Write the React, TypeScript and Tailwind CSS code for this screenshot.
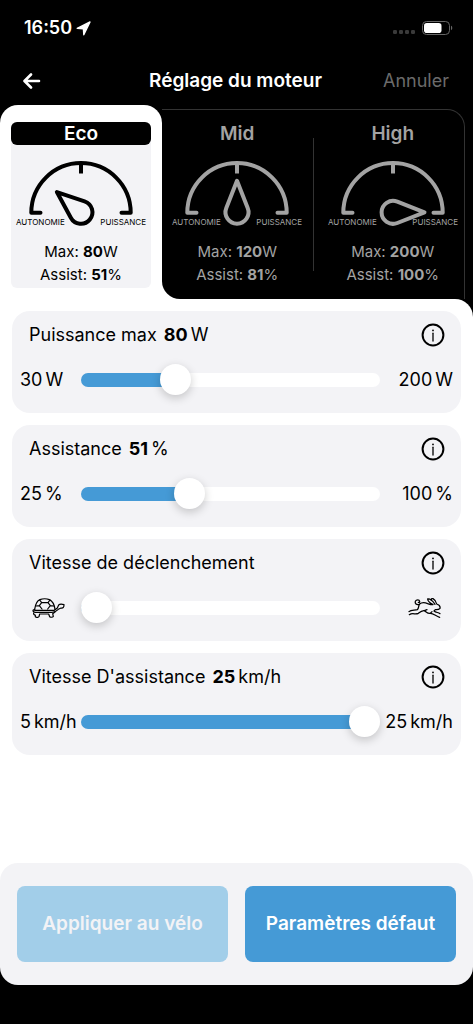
import { useState, type ReactNode } from "react";
import clsx from "clsx";

type Mode = {
  id: string;
  name: string;
  power: number;
  assist: number;
  angle: number;
};

const MODES: Mode[] = [
  { id: "eco", name: "Eco", power: 80, assist: 51, angle: -50 },
  { id: "mid", name: "Mid", power: 120, assist: 81, angle: 0 },
  { id: "high", name: "High", power: 200, assist: 100, angle: 90 },
];

const THUMB = 31;

function Gauge({ angle }: { angle: number }) {
  return (
    <svg
      aria-hidden="true"
      className="mx-auto mt-[15px] block h-[68px] w-[130px] overflow-visible"
      fill="none"
      stroke="currentColor"
      strokeLinecap="round"
      strokeLinejoin="round"
      strokeWidth="4"
      viewBox="0 0 130 68"
    >
      <path d="M24.5 52.7 H15.3 A49.7 49.7 0 0 1 114.7 52.7 H105.5" />
      <path d="M65 3 V13.5" strokeLinecap="butt" />
      <path
        d="M0 -31.5 L10.7 -4.3 A11.5 11.5 0 1 1 -10.7 -4.3 Z"
        transform={`translate(65 52.3) rotate(${angle})`}
      />
      <g className="text-[8px]" fill="currentColor" stroke="none">
        <text x="0" y="65">AUTONOMIE</text>
        <text textAnchor="end" x="130" y="65">PUISSANCE</text>
      </g>
    </svg>
  );
}

type ModeTabProps = {
  mode: Mode;
  active?: boolean;
  className?: string;
};

function ModeTab({ mode, active, className }: ModeTabProps) {
  return (
    <button
      aria-pressed={Boolean(active)}
      className={clsx(
        "block self-start text-center",
        active ? "rounded-md bg-[#f3f3f6] text-black" : "text-[#a3a3a3]",
        className,
      )}
      type="button"
    >
      <span
        className={clsx(
          "block h-[23px] rounded-md text-[19px] leading-[23px] font-semibold",
          active && "bg-black text-white",
        )}
      >
        {mode.name}
      </span>
      <Gauge angle={mode.angle} />
      <span className="mt-3 block pb-0.5 text-[15px] leading-[23px]">
        <span className="block">
          Max: <b>{mode.power}</b>W
        </span>
        <span className="block">
          Assist: <b>{mode.assist}</b>%
        </span>
      </span>
    </button>
  );
}

function InfoIcon() {
  return (
    <svg aria-hidden="true" className="size-6" fill="none" stroke="currentColor" viewBox="0 0 24 24">
      <circle cx="12" cy="12" r="10.4" strokeWidth="2" />
      <path d="M12 10.2 V18" strokeLinecap="round" strokeWidth="1.3" />
      <circle cx="12" cy="7.4" fill="currentColor" r="0.9" stroke="none" />
    </svg>
  );
}

function TortoiseIcon() {
  return (
    <svg
      aria-label="Lent"
      className="h-5 w-[33px]"
      fill="none"
      role="img"
      stroke="currentColor"
      strokeLinecap="round"
      strokeLinejoin="round"
      strokeWidth="3.6"
      viewBox="0 0 99 60"
    >
      <path d="M8 34 C10 20 16 8 24 5 C31 2 45 2 52 5 C61 9 67 20 69 34" />
      <path d="M8 34 L3 37 C3 42 6 43 10 43 H60 C68 43 73 40 79 34 L87 30 C94 31 96 27 96 20 C90 18 83 18 80 21 L76 30 L67 37 H8" />
      <path d="M23 6 L29 14 H48 L54 6 M29 14 L22 23 L30 33 M48 14 L55 23 L47 33 M22 23 L12 24 M55 23 L65 24" />
      <path d="M5 45 C4 49 7 51 10 51 L10 56 C14 59 19 58 21 56 L23 48 H50 L53 56 C57 59 62 58 64 55 L62 47 L69 42" />
    </svg>
  );
}

function HareIcon() {
  return (
    <svg
      aria-label="Rapide"
      className="h-5 w-[33px]"
      fill="none"
      role="img"
      stroke="currentColor"
      strokeLinecap="round"
      strokeLinejoin="round"
      strokeWidth="3.8"
      viewBox="0 0 99 60"
    >
      <path d="M34 19 C25 22 20 16 22 10 C25 4 34 4 35 10 C36 13 33 14 31 13" />
      <path d="M34 19 C42 12 52 14 59 17 C65 19 70 21 75 20 C66 15 59 9 59 3 C67 2 75 10 81 19" />
      <path d="M70 7 C69 2 72 1 75 2 C82 6 85 13 86 18 C93 20 97 26 96 31 C92 36 86 35 82 35 L78 39 C84 44 91 43 96 47" />
      <path d="M34 19 C31 25 33 31 28 35 C20 38 10 34 3 41 M4 50 C14 43 22 51 31 46 C37 41 42 37 49 38 C56 42 58 47 67 46 C77 46 83 54 95 58" />
      <path d="M49 38 L57 35 M67 46 L72 41" />
    </svg>
  );
}

type SettingCardProps = {
  id: string;
  title: string;
  unit?: string;
  min: number;
  max: number;
  initial: number;
  minLabel: ReactNode;
  maxLabel: ReactNode;
};

function SettingCard({ id, title, unit, min, max, initial, minLabel, maxLabel }: SettingCardProps) {
  const [value, setValue] = useState(initial);
  const ratio = (value - min) / (max - min);
  // the fill stops under the middle of the thumb
  const fill = `calc(${THUMB / 2}px + (100% - ${THUMB}px) * ${ratio})`;

  return (
    <section className="rounded-[18px] bg-[#f3f3f6] px-2 pb-[19px]">
      <div className="flex h-[47px] items-center justify-between pr-2 pl-[9px]">
        <label className="text-lg" htmlFor={id}>
          {title}
          {unit ? (
            <>
              <b className="ml-[7px] font-bold">{value}</b>
              <span className="ml-[3px]">{unit}</span>
            </>
          ) : null}
        </label>
        <button aria-label={`Info : ${title}`} type="button">
          <InfoIcon />
        </button>
      </div>
      <div className="grid h-9 grid-cols-[61px_1fr_73px] items-end text-lg whitespace-nowrap">
        <span>{minLabel}</span>
        <span className="flex h-7 items-center">
          <input
            className="h-[14px] w-full cursor-pointer appearance-none rounded-full [&::-webkit-slider-runnable-track]:h-[14px] [&::-webkit-slider-thumb]:-mt-[9px] [&::-webkit-slider-thumb]:size-[31px] [&::-webkit-slider-thumb]:appearance-none [&::-webkit-slider-thumb]:rounded-full [&::-webkit-slider-thumb]:bg-white [&::-webkit-slider-thumb]:shadow-[0_3px_10px_rgba(0,0,0,0.2)]"
            id={id}
            max={max}
            min={min}
            onChange={(event) => setValue(Number(event.target.value))}
            style={{ background: `linear-gradient(to right, #459ad6 ${fill}, #fff ${fill})` }}
            type="range"
            value={value}
          />
        </span>
        <span className="text-right">{maxLabel}</span>
      </div>
    </section>
  );
}

function Quantity({ value, unit }: { value: number; unit: string }) {
  return (
    <>
      {value}
      <span className="ml-[3px]">{unit}</span>
    </>
  );
}

function StatusBar() {
  return (
    <div className="flex h-14 items-center justify-between pr-5 pl-6 text-white">
      <div className="flex items-center gap-1">
        <span className="text-lg font-semibold">16:50</span>
        <svg
          aria-hidden="true"
          className="size-[15px]"
          fill="currentColor"
          stroke="currentColor"
          strokeLinejoin="round"
          strokeWidth="1.4"
          viewBox="0 0 15 15"
        >
          <path d="M14 1 L7.8 13.8 L7.4 7.8 L1.2 7.4 Z" />
        </svg>
      </div>
      <div className="flex items-center gap-[7px]">
        <svg aria-hidden="true" className="h-[14px] w-[22px]" fill="#3a3a3a" viewBox="0 0 22 14">
          <rect height="4" rx="1.3" width="4" x="0" y="9" />
          <rect height="4" rx="1.3" width="4" x="6" y="9" />
          <rect height="4" rx="1.3" width="4" x="12" y="9" />
          <rect height="4" rx="1.3" width="4" x="18" y="9" />
        </svg>
        <svg aria-hidden="true" className="h-[14px] w-[31px]" fill="none" viewBox="0 0 31 14">
          <rect height="13" rx="4" stroke="#666" width="27" x="0.5" y="0.5" />
          <rect fill="#fff" height="10" rx="2.8" width="17.5" x="2" y="2" />
          <path d="M29 4.8 C30.7 5.4 30.7 8.6 29 9.2 Z" fill="#666" />
        </svg>
      </div>
    </div>
  );
}

export default function App() {
  const [eco, mid, high] = MODES;

  return (
    <div className="flex min-h-screen flex-col bg-black font-['Inter',sans-serif] text-black">
      <StatusBar />

      <header className="grid h-[49px] grid-cols-[1fr_auto_1fr] items-center pr-6 pl-[22px] text-lg">
        <button aria-label="Retour" className="justify-self-start text-white" type="button">
          <svg
            aria-hidden="true"
            className="h-4 w-5"
            fill="none"
            stroke="currentColor"
            strokeLinecap="round"
            strokeLinejoin="round"
            strokeWidth="2.6"
            viewBox="0 0 20 16"
          >
            <path d="M9 1.5 L2.5 8 L9 14.5 M3 8 H17" />
          </svg>
        </button>
        <h1 className="text-[19px] font-semibold text-white">Réglage du moteur</h1>
        <button className="justify-self-end text-[#6b6b6b]" type="button">
          Annuler
        </button>
      </header>

      <nav aria-label="Mode" className="grid grid-cols-[162fr_311fr]">
        <div className="rounded-t-[18px] bg-white px-[11px] pt-[17px] pb-[11px]">
          <ModeTab active className="w-full" mode={eco} />
        </div>
        <div className="bg-[linear-gradient(to_top,#fff_24px,#000_24px)]">
          <div className="h-full rounded-bl-[18px] bg-black pt-1 pr-2">
            <div className="grid h-full grid-cols-[1fr_1px_1fr] rounded-tr-[18px] border-t border-r border-[#333] pt-3">
              <ModeTab mode={mid} />
              <div className="mt-4 mb-7 bg-[#333]" />
              <ModeTab className="pl-2" mode={high} />
            </div>
          </div>
        </div>
      </nav>

      <main className="flex flex-1 flex-col gap-3 rounded-tr-[18px] bg-white px-3 pt-3 pb-6">
        <SettingCard
          id="power"
          initial={80}
          max={200}
          maxLabel={<Quantity unit="W" value={200} />}
          min={30}
          minLabel={<Quantity unit="W" value={30} />}
          title="Puissance max"
          unit="W"
        />
        <SettingCard
          id="assist"
          initial={51}
          max={100}
          maxLabel={<Quantity unit="%" value={100} />}
          min={25}
          minLabel={<Quantity unit="%" value={25} />}
          title="Assistance"
          unit="%"
        />
        <SettingCard
          id="trigger"
          initial={0}
          max={10}
          maxLabel={
            <span className="flex h-7 items-center justify-end pr-3">
              <HareIcon />
            </span>
          }
          min={0}
          minLabel={
            <span className="flex h-7 items-center pl-3">
              <TortoiseIcon />
            </span>
          }
          title="Vitesse de déclenchement"
        />
        <SettingCard
          id="speed"
          initial={25}
          max={25}
          maxLabel={<Quantity unit="km/h" value={25} />}
          min={5}
          minLabel={<Quantity unit="km/h" value={5} />}
          title="Vitesse D'assistance"
          unit="km/h"
        />
      </main>

      <footer className="bg-[linear-gradient(#fff_50%,#000_50%)] pb-[39px]">
        <div className="grid grid-cols-2 gap-[17px] rounded-[18px] bg-[#f3f3f6] px-[17px] py-[23px] text-[19px] font-semibold text-white">
          <button className="h-[76px] rounded-lg bg-[#a2cee9] text-[#f3f3f6]" type="button">
            Appliquer au vélo
          </button>
          <button className="h-[76px] rounded-lg bg-[#459ad6]" type="button">
            Paramètres défaut
          </button>
        </div>
      </footer>
    </div>
  );
}
